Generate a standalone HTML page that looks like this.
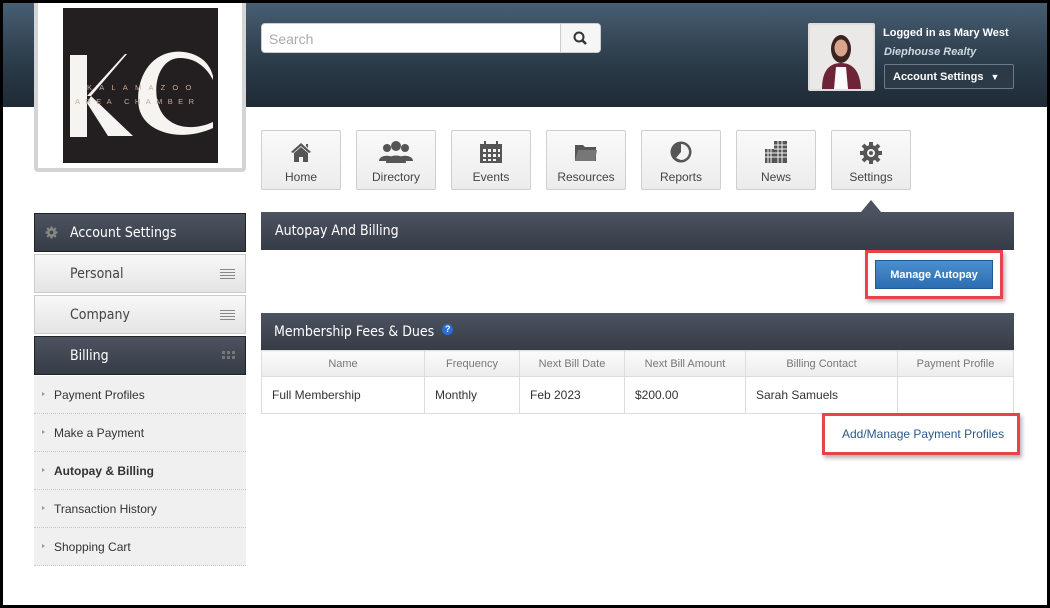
<!DOCTYPE html>
<html><head><meta charset="utf-8"><style>
*{box-sizing:border-box;margin:0;padding:0}
body{width:1050px;height:608px;background:#000;font-family:"Liberation Sans",sans-serif;overflow:hidden;position:relative}
.frame{position:absolute;left:3px;top:3px;width:1044px;height:602px;background:#fff;overflow:hidden}
.hdr{position:absolute;left:0;top:0;width:1044px;height:104px;background:linear-gradient(#475e72,#2a3a48 60%,#1f2b36)}
.abs{position:absolute}
.logo{left:31px;top:-3px;width:212px;height:172px;background:#fff;border:4px solid #d4d4d4;border-top:none;border-radius:0 0 4px 4px}
.logo .img{position:absolute;left:25px;top:8px;width:155px;height:155px;background:#231f20;overflow:hidden}
.search{left:258px;top:20px;width:340px;height:30px;background:#fff;border-radius:4px;border:1px solid #ccc}
.search span{position:absolute;left:7px;top:7px;color:#aaa;font-size:14px}
.search .b{position:absolute;right:0;top:0;width:40px;height:28px;border-left:1px solid #ccc;background:#f6f6f6;border-radius:0 4px 4px 0}
.nav{top:127px;width:80px;height:60px;background:linear-gradient(#fafafa,#ececec);border:1px solid #cfcfcf;border-radius:2px;text-align:center;font-size:12px;color:#444}
.nav svg{position:absolute;left:50%;top:10px;transform:translateX(-50%)}
.nav b{position:absolute;left:0;right:0;top:39px;font-weight:normal}
.bar{background:linear-gradient(#4c5360,#363c46);color:#fff;font-family:"DejaVu Sans Condensed","Liberation Sans Narrow",sans-serif;font-size:14px}
.side{left:31px;width:212px;height:39px}
.lt{background:linear-gradient(#f8f8f8,#e4e4e4);border:1px solid #ccc;color:#444;font-family:"DejaVu Sans Condensed",sans-serif;font-size:14px}
.sub{left:31px;width:212px;height:38px;background:#f0f0f0;border-bottom:1px dotted #c8c8c8;font-size:12px;color:#333;padding:12px 0 0 20px}
.sub:before{content:"";position:absolute;left:8px;top:16px;border-left:3px solid #999;border-top:2.5px solid transparent;border-bottom:2.5px solid transparent}
table{border-collapse:collapse;font-size:12px}
th{font-weight:normal;color:#777;font-size:11px;height:26px;background:linear-gradient(#fbfbfb,#ececec);border:1px solid #ddd}
td{height:37px;border:1px solid #ddd;color:#333;padding-left:10px}
.red{border:3px solid #e8434a;box-shadow:2px 3px 4px rgba(0,0,0,.3)}
.ham{position:absolute;right:10px;top:14px;width:15px;height:10px;background:repeating-linear-gradient(#888 0 1px,transparent 1px 3px)}
</style></head><body><div class="frame">
<div class="hdr"></div>
<div class="abs logo"><div class="img">
<svg width="155" height="155" viewBox="0 0 155 155"><rect x="7" y="47" width="17" height="82" fill="#f6f4f0"/><path d="M24 88 L62 46 L64 46 L28 88 Z" fill="#f6f4f0"/><path d="M28 88 L70 128 L45 128 L24 95Z" fill="#f6f4f0"/><path d="M150 68 C145 48 125 42 110 44 C82 48 72 78 76 100 C82 126 120 134 150 120 L150 114 C128 124 102 120 95 96 C89 72 99 50 117 50 C133 50 144 60 150 72Z" fill="#f6f4f0"/><text x="24" y="82" fill="#c9a99a" font-size="7.5" letter-spacing="7.2" font-family="Liberation Sans">KALAMAZOO</text><text x="12" y="96" fill="#c9a99a" font-size="7.5" letter-spacing="5.4" font-family="Liberation Sans">AREA CHAMBER</text></svg></div></div>
<div class="abs search"><span>Search</span><div class="b"><svg width="40" height="28"><circle cx="18" cy="13" r="4.5" fill="none" stroke="#333" stroke-width="2"/><path d="M21 16l4 4" stroke="#333" stroke-width="2.5"/></svg></div></div>
<div class="abs" style="left:805px;top:20px;width:67px;height:68px;background:#eee;border:2px solid #ddd;border-radius:2px;overflow:hidden"><svg width="63" height="64"><rect width="63" height="64" fill="#ebe9e8"/><path d="M12 64 C12 45 20 38 31 38 C42 38 50 45 51 64Z" fill="#6e2437"/><path d="M24 64 L26 42 L36 42 L38 64Z" fill="#fafafa"/><ellipse cx="31" cy="24" rx="10" ry="14" fill="#3a2420"/><ellipse cx="31" cy="23" rx="6.5" ry="8.5" fill="#d9a58e"/></svg></div>
<div class="abs" style="left:880px;top:24px;color:#fff;font-size:11px;font-weight:bold">Logged in as Mary West</div>
<div class="abs" style="left:881px;top:43px;color:#cfd8e0;font-size:11px;font-weight:bold;font-style:italic">Diephouse Realty</div>
<div class="abs" style="left:881px;top:61px;width:130px;height:25px;background:#2c3a47;border:1px solid #6a7a88;border-radius:2px;color:#fff;font-size:11px;font-weight:bold;padding:6px 0 0 8px">Account Settings <span style="font-size:9px;margin-left:4px">▼</span></div>

<div class="abs nav" style="left:258px"><svg width="22" height="22" viewBox="0 0 22 22"><path d="M11 2 L1 11 L3 12 L11 5 L19 12 L21 11 Z M16 3h2v4l-2-2Z" fill="#555"/><path d="M4 12 L11 6 L18 12 V21 H13 V16 H9 V21 H4Z" fill="#555"/></svg><b>Home</b></div>
<div class="abs nav" style="left:353px"><svg width="36" height="22" viewBox="0 0 36 22"><circle cx="9" cy="7" r="4" fill="#555"/><circle cx="27" cy="7" r="4" fill="#555"/><path d="M1 20 C1 13 17 13 17 20Z M19 20 C19 13 35 13 35 20Z" fill="#555"/><circle cx="18" cy="5" r="5" fill="#555"/><path d="M8 22 C8 12 28 12 28 22Z" fill="#555"/></svg><b>Directory</b></div>
<div class="abs nav" style="left:448px"><svg width="24" height="22" viewBox="0 0 24 22"><rect x="1" y="3" width="22" height="19" fill="#555"/><g fill="#f4f4f4"><rect x="4" y="8" width="3" height="3"/><rect x="9" y="8" width="3" height="3"/><rect x="14" y="8" width="3" height="3"/><rect x="19" y="8" width="2" height="3"/><rect x="4" y="13" width="3" height="3"/><rect x="9" y="13" width="3" height="3"/><rect x="14" y="13" width="3" height="3"/><rect x="19" y="13" width="2" height="3"/><rect x="4" y="18" width="3" height="2"/><rect x="9" y="18" width="3" height="2"/><rect x="14" y="18" width="3" height="2"/></g><rect x="5" y="0" width="2" height="5" fill="#555"/><rect x="17" y="0" width="2" height="5" fill="#555"/></svg><b>Events</b></div>
<div class="abs nav" style="left:543px"><svg width="24" height="22" viewBox="0 0 24 22"><path d="M1 4h8l2 2h11v14H1Z" fill="#555"/><path d="M4 9h19l-2 11H1Z" fill="#777"/></svg><b>Resources</b></div>
<div class="abs nav" style="left:638px"><svg width="24" height="22" viewBox="0 0 24 22"><circle cx="12" cy="11" r="10.5" fill="#555"/><path d="M12 3 A8 8 0 0 1 12 19 L7 17 L12 11Z" fill="#f2f2f2"/></svg><b>Reports</b></div>
<div class="abs nav" style="left:733px"><svg width="24" height="22" viewBox="0 0 24 22"><rect x="10" y="0" width="13" height="22" fill="#555"/><rect x="1" y="8" width="10" height="14" fill="#555"/><g stroke="#f4f4f4" stroke-width="1"><path d="M10 4h13M10 8h13M10 12h13M10 16h13M14 0v22M18 0v22M1 12h9M1 16h9M4 8v14M7 8v14"/></g></svg><b>News</b></div>
<div class="abs nav" style="left:828px"><svg width="24" height="24" viewBox="0 0 24 24"><g fill="#555"><circle cx="12" cy="12" r="8"/><g stroke="#555" stroke-width="4"><path d="M12 1v22M1 12h22M4 4l16 16M20 4L4 20"/></g></g><circle cx="12" cy="12" r="4" fill="#f2f2f2"/><circle cx="12" cy="12" r="2" fill="#555"/></svg><b>Settings</b></div>

<div class="abs" style="left:858px;top:197px;width:0;height:0;border-left:10px solid transparent;border-right:10px solid transparent;border-bottom:12px solid #4c5360"></div>
<div class="abs bar" style="left:258px;top:209px;width:753px;height:38px;padding:11px 0 0 14px">Autopay And Billing</div>
<div class="abs red" style="left:862px;top:247px;width:138px;height:49px"></div>
<div class="abs" style="left:872px;top:257px;width:118px;height:29px;background:linear-gradient(#4b8fd0,#2c6cb0);border:1px solid #245a94;color:#fff;font-size:11px;font-weight:bold;text-align:center;padding-top:8px">Manage Autopay</div>

<div class="abs bar" style="left:258px;top:310px;width:753px;height:38px;padding:11px 0 0 13px">Membership Fees &amp; Dues <span style="display:inline-block;width:11px;height:11px;border-radius:50%;background:#2a6fd6;color:#fff;font-size:9px;text-align:center;line-height:11px;vertical-align:top;margin-left:4px;font-family:Liberation Sans;font-weight:bold">?</span></div>
<table class="abs" style="left:258px;top:347px;width:753px">
<tr><th style="width:163px">Name</th><th style="width:95px">Frequency</th><th style="width:105px">Next Bill Date</th><th style="width:121px">Next Bill Amount</th><th style="width:152px">Billing Contact</th><th>Payment Profile</th></tr>
<tr><td>Full Membership</td><td>Monthly</td><td>Feb 2023</td><td>$200.00</td><td>Sarah Samuels</td><td></td></tr></table>
<div class="abs red" style="left:819px;top:410px;width:198px;height:42px"></div>
<div class="abs" style="left:839px;top:424px;color:#2a5a8a;font-size:12px">Add/Manage Payment Profiles</div>

<div class="abs bar side" style="top:210px;border:1px solid #222;padding:11px 0 0 35px;font-size:14px"><svg class="abs" style="left:10px;top:12px" width="13" height="13" viewBox="0 0 24 24"><g fill="#888"><circle cx="12" cy="12" r="8"/><g stroke="#888" stroke-width="4"><path d="M12 1v22M1 12h22M4 4l16 16M20 4L4 20"/></g></g><circle cx="12" cy="12" r="3.5" fill="#444"/></svg>Account Settings</div>
<div class="abs lt side" style="top:251px;padding:11px 0 0 35px">Personal<span class="ham"></span></div>
<div class="abs lt side" style="top:292px;padding:11px 0 0 35px">Company<span class="ham"></span></div>
<div class="abs bar side" style="top:333px;border:1px solid #222;padding:11px 0 0 35px;font-size:14px">Billing<span class="abs" style="right:10px;top:14px;width:13px;height:9px;background:repeating-linear-gradient(90deg,#777 0 3px,transparent 3px 5px);-webkit-mask:repeating-linear-gradient(#000 0 3px,transparent 3px 5px)"></span></div>
<div class="abs sub" style="top:373px">Payment Profiles</div>
<div class="abs sub" style="top:411px">Make a Payment</div>
<div class="abs sub" style="top:449px;font-weight:bold">Autopay &amp; Billing</div>
<div class="abs sub" style="top:487px">Transaction History</div>
<div class="abs sub" style="top:525px">Shopping Cart</div>
</div></body></html>
